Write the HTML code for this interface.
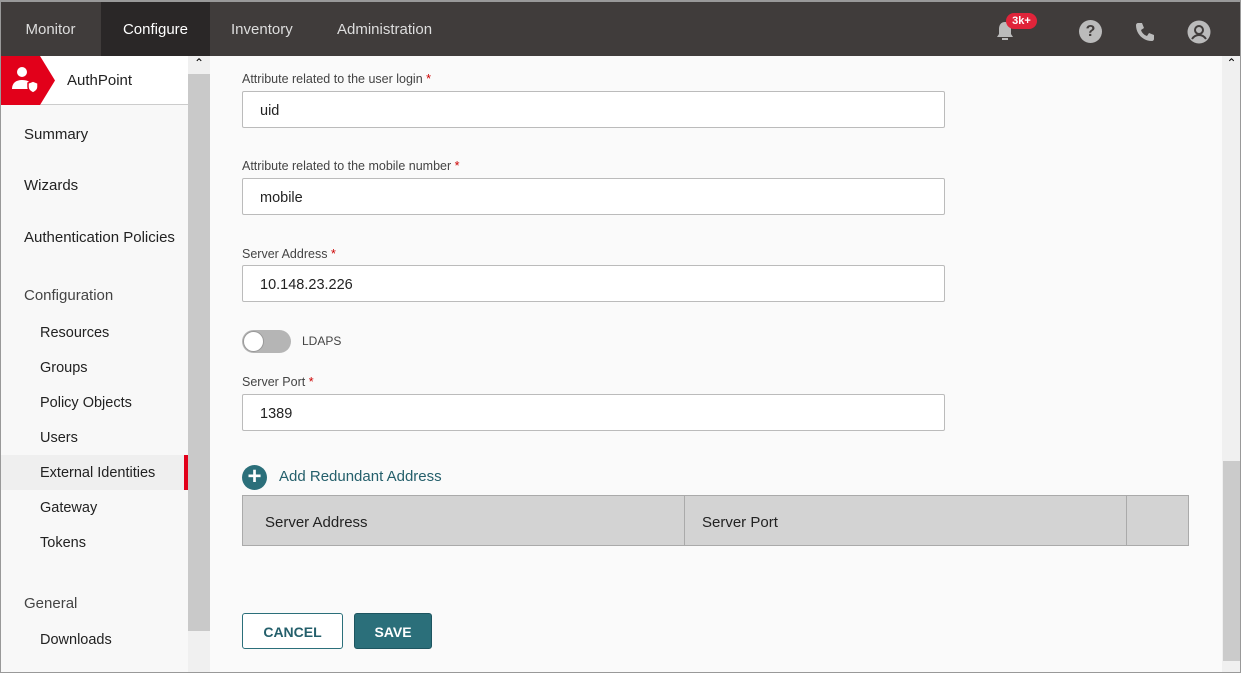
<!DOCTYPE html>
<html><head><style>
*{margin:0;padding:0;box-sizing:border-box}
body{width:1241px;height:673px;overflow:hidden;background:#fafafa;font-family:"Liberation Sans",sans-serif;position:relative}
.frame{position:absolute;left:0;top:0;width:1241px;height:673px;border:1px solid #999;pointer-events:none;z-index:9}
.top{position:absolute;left:0;top:0;width:1241px;height:56px;background:#403c3b;border-top:2px solid #999}
.top span{position:absolute;top:0;height:54px;line-height:56px;color:#ddd;font-size:15px}
.side{position:absolute;left:0;top:56px;width:188px;height:617px;background:#f8f8f8}
.sb{position:absolute;left:188px;top:56px;width:22px;height:617px;background:#c9c9c9}
.item{position:absolute;left:24px;font-size:15px;color:#222}
.sub{left:40px;font-size:14.5px}
.lbl{position:absolute;left:242px;font-size:12.5px;color:#444}
.lbl b{color:#c00;font-weight:normal}
.inp{position:absolute;left:242px;width:703px;height:37px;border:1px solid #bbb;background:#fff;border-radius:2px;padding-left:17px;line-height:38px;font-size:14.5px;color:#222}
</style></head><body>
<div class="frame"></div>
<div class="top">
<span style="left:0;width:101px;text-align:center">Monitor</span>
<span style="left:101px;width:109px;background:#2a2727;text-align:center;color:#fff">Configure</span>
<span style="left:231px">Inventory</span>
<span style="left:337px">Administration</span>
<svg style="position:absolute;left:994px;top:18px" width="22" height="22" viewBox="0 0 22 22"><path d="M11 2c-4 0-6 3-6 7v5l-2 3h16l-2-3V9c0-4-2-7-6-7z" fill="#bbb"/><rect x="8" y="18" width="6" height="2" fill="#bbb"/></svg>
<div style="position:absolute;left:1006px;top:11px;width:31px;height:16px;border-radius:8px;background:#e0243a;color:#fff;font-size:11px;font-weight:bold;text-align:center;line-height:16px">3k+</div>
<div style="position:absolute;left:1079px;top:18px;width:23px;height:23px;border-radius:50%;background:#bbb;color:#403c3b;font-weight:bold;font-size:16px;text-align:center;line-height:23px">?</div>
<svg style="position:absolute;left:1133px;top:18px" width="24" height="24" viewBox="0 0 24 24"><path d="M5 3l4 0 2 5-3 2c1 3 3 5 6 6l2-3 5 2v4c0 1-1 2-2 2C10 21 3 14 3 5c0-1 1-2 2-2z" fill="#bbb"/></svg>
<svg style="position:absolute;left:1187px;top:18px" width="24" height="24" viewBox="0 0 24 24"><circle cx="12" cy="12" r="11.5" fill="#bbb"/><circle cx="12" cy="10" r="4" fill="none" stroke="#403c3b" stroke-width="2"/><path d="M5 19c2-3 4-4 7-4s5 1 7 4" fill="none" stroke="#403c3b" stroke-width="2"/></svg>
</div>
<div class="side">
<div style="position:absolute;left:0;top:0;width:188px;height:49px;border-bottom:1px solid #ccc;background:#fff"></div>
<svg style="position:absolute;left:0;top:0" width="56" height="49"><polygon points="0,0 40,0 55,24.5 40,49 0,49" fill="#e2001a"/><circle cx="22" cy="16" r="5" fill="#fff"/><path d="M12 33c0-6 4-9 10-9s8 2 8 4v5z" fill="#fff"/><path d="M28 27l5-2 5 2v4c0 3-3 5-5 6-2-1-5-3-5-6z" fill="#fff" stroke="#e2001a" stroke-width="1.5"/></svg>
<div class="item" style="left:67px;top:16px">AuthPoint</div>
<div class="item" style="top:70px">Summary</div>
<div class="item" style="top:121px">Wizards</div>
<div class="item" style="top:173px">Authentication Policies</div>
<div class="item" style="top:231px;color:#444">Configuration</div>
<div class="item sub" style="top:269px">Resources</div>
<div class="item sub" style="top:304px">Groups</div>
<div class="item sub" style="top:339px">Policy Objects</div>
<div class="item sub" style="top:374px">Users</div>
<div style="position:absolute;left:0;top:399px;width:188px;height:35px;background:#efefef;border-right:4px solid #e2001a"></div>
<div class="item sub" style="top:409px">External Identities</div>
<div class="item sub" style="top:444px">Gateway</div>
<div class="item sub" style="top:479px">Tokens</div>
<div class="item" style="top:539px;color:#444">General</div>
<div class="item sub" style="top:576px">Downloads</div>
</div>
<div class="sb"><div style="position:absolute;top:0;width:22px;height:18px;background:#f0f0f0;text-align:center;font-size:12px">&#8963;</div><div style="position:absolute;bottom:0;width:22px;height:42px;background:#f0f0f0"></div></div>
<div style="position:absolute;left:1222px;top:56px;width:19px;height:617px;background:#f0f0f0"><div style="position:absolute;top:405px;left:1px;width:17px;height:200px;background:#cbcbcb"></div><div style="text-align:center;font-size:12px">&#8963;</div></div>
<div class="lbl" style="top:72px">Attribute related to the user login <b>*</b></div>
<div class="inp" style="top:91px">uid</div>
<div class="lbl" style="top:159px">Attribute related to the mobile number <b>*</b></div>
<div class="inp" style="top:178px">mobile</div>
<div class="lbl" style="top:247px">Server Address <b>*</b></div>
<div class="inp" style="top:265px">10.148.23.226</div>
<div style="position:absolute;left:242px;top:330px;width:49px;height:23px;border-radius:12px;background:#b5b5b5"><div style="position:absolute;left:1px;top:1px;width:21px;height:21px;border-radius:50%;background:#fff;border:1px solid #999"></div></div>
<div class="lbl" style="left:302px;top:334px;font-size:12px">LDAPS</div>
<div class="lbl" style="top:375px">Server Port <b>*</b></div>
<div class="inp" style="top:394px">1389</div>
<div style="position:absolute;left:242px;top:465px;width:25px;height:25px;border-radius:50%;background:#2b6f7a;color:#fff;font-size:24px;line-height:24px;text-align:center;font-weight:bold">+</div>
<div style="position:absolute;left:279px;top:468px;font-size:15px;color:#245f6b">Add Redundant Address</div>
<div style="position:absolute;left:242px;top:495px;width:947px;height:51px;background:#d3d3d3;border:1px solid #aaa">
<div style="position:absolute;left:441px;top:0;height:50px;border-left:1px solid #aaa"></div>
<div style="position:absolute;left:883px;top:0;height:50px;border-left:1px solid #aaa"></div>
<div style="position:absolute;left:22px;top:18px;font-size:15px;color:#222">Server Address</div>
<div style="position:absolute;left:459px;top:18px;font-size:15px;color:#222">Server Port</div>
</div>
<div style="position:absolute;left:242px;top:613px;width:101px;height:36px;border:1px solid #2b6f7a;border-radius:3px;background:#fff;color:#245f6b;font-weight:bold;font-size:14px;text-align:center;line-height:36px">CANCEL</div>
<div style="position:absolute;left:354px;top:613px;width:78px;height:36px;border-radius:3px;background:#2b6f7a;border:1px solid #1d5560;color:#fff;font-weight:bold;font-size:14px;text-align:center;line-height:36px">SAVE</div>
</body></html>
